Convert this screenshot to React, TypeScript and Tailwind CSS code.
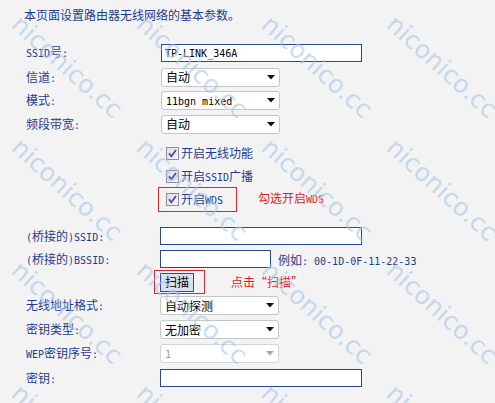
import React from 'react';

const mono = "font-['DejaVu_Sans_Mono',monospace] text-[10px]";

// split ascii runs so that latin chars get the narrow mono face, like the router's SimSun page
const Txt: React.FC<{ s: string }> = ({ s }) => {
  const parts = s.split(/([\x20-\x7e]+)/).filter((p) => p !== '');
  return (
    <>
      {parts.map((p, i) =>
        /^[\x20-\x7e]+$/.test(p) ? (
          <span key={i} className={mono}>
            {p}
          </span>
        ) : (
          <span key={i}>{p}</span>
        ),
      )}
    </>
  );
};

const Arrow: React.FC<{ disabled?: boolean }> = ({ disabled }) => (
  <svg width="8" height="5" viewBox="0 0 8 5" className="shrink-0">
    <polygon points="0,0 8,0 4,4.5" fill={disabled ? '#a8a8a8' : '#111'} />
  </svg>
);

const Select: React.FC<{ value: string; disabled?: boolean; shift?: boolean }> = ({
  value,
  disabled,
  shift,
}) => (
  <div
    className={
      'flex items-center justify-between w-[119px] h-[19px] rounded-[3px] border bg-white pl-[4px] pr-[4px] ' +
      (disabled ? 'border-[#d4d4d4] text-[#9a9a9a]' : 'border-[#c6c6c6] text-black') +
      (shift ? ' ml-px' : '')
    }>
    <span className="leading-none">
      <Txt s={value} />
    </span>
    <Arrow disabled={disabled} />
  </div>
);

const Input: React.FC<{ value?: string; w: string; shift?: boolean }> = ({ value, w, shift }) => (
  <div
    className={
      'flex items-center h-[18px] border border-[#27478f] bg-white pl-[3px] text-black ' +
      w +
      (shift ? ' ml-px' : '')
    }>
    {value && <span className="leading-none"><Txt s={value} /></span>}
  </div>
);

const Check: React.FC = () => (
  <svg width="13" height="13" viewBox="0 0 13 13" className="shrink-0">
    <defs>
      <linearGradient id="cbg" x1="0" y1="0" x2="1" y2="1">
        <stop offset="0" stopColor="#dcdde6" />
        <stop offset="1" stopColor="#f6f6f8" />
      </linearGradient>
    </defs>
    <rect x="0.5" y="0.5" width="12" height="12" fill="url(#cbg)" stroke="#8b8e98" />
    <path d="M3 6.2 L5.3 9.2 L10 3" fill="none" stroke="#4b4aa6" strokeWidth="1.8" />
  </svg>
);

const Row: React.FC<{ label?: string; h: string; children?: React.ReactNode }> = ({
  label,
  h,
  children,
}) => (
  <div className={'flex items-center ' + h}>
    <div className="w-[134px] shrink-0 leading-none">{label && <Txt s={label} />}</div>
    <div className="flex items-center">{children}</div>
  </div>
);

const Watermark: React.FC = () => {
  const marks: { left: number; top: number }[] = [];
  for (let r = 0; r < 4; r++) {
    for (let c = 0; c < 4; c++) {
      marks.push({ left: 24 + c * 125, top: 11 + r * 123 });
    }
  }
  return (
    <div className="pointer-events-none absolute inset-0 overflow-hidden">
      {marks.map((m, i) => (
        <span
          key={i}
          className="absolute origin-top-left rotate-[42deg] whitespace-nowrap font-['DejaVu_Sans',sans-serif] text-[25px] leading-none text-[#a9c6ea] opacity-60"
          style={{ left: m.left, top: m.top }}>
          niconico.cc
        </span>
      ))}
    </div>
  );
};

export default function App() {
  return (
    <div className="relative w-[495px] h-[403px] overflow-hidden bg-[#f3f3f3] font-['Noto_Sans_CJK_SC',sans-serif] text-[12px] text-[#1d3d8e]">
      <div className="h-[30px] pl-[24px] flex items-center leading-none">
        本页面设置路由器无线网络的基本参数。
      </div>

      <div className="mt-[10px] pl-[26px]">
        <Row label="SSID号:" h="h-[25px]">
          <Input value="TP-LINK_346A" w="w-[201px]" shift />
        </Row>
        <Row label="信道:" h="h-[24px]">
          <Select value="自动" shift />
        </Row>
        <Row label="模式:" h="h-[23px]">
          <Select value="11bgn mixed" shift />
        </Row>
        <Row label="频段带宽:" h="h-[24px]">
          <Select value="自动" shift />
        </Row>

        <div className="mt-[5px]">
          <Row h="h-[24px]">
            <div className="flex items-center gap-[2px] pl-[6px] leading-none">
              <Check />
              <span>开启无线功能</span>
            </div>
          </Row>
          <Row h="h-[23px]">
            <div className="flex items-center gap-[2px] pl-[6px] leading-none">
              <Check />
              <span>
                <Txt s="开启SSID广播" />
              </span>
            </div>
          </Row>
          <Row h="h-[23px]">
            <div className="flex items-center">
              <div className="-ml-[2px] flex items-center gap-[2px] w-[79px] h-[25px] border border-[#d8262a] pl-[7px] leading-none">
                <Check />
                <span>
                  <Txt s="开启WDS" />
                </span>
              </div>
              <span className="ml-[21px] -mt-[3px] leading-none text-[#e51c1c]">
                <Txt s="勾选开启WDS" />
              </span>
            </div>
          </Row>
        </div>

        <div className="mt-[13px]">
          <Row label="(桥接的)SSID:" h="h-[24px]">
            <Input w="w-[202px]" />
          </Row>
          <Row label="(桥接的)BSSID:" h="h-[22px]">
            <Input w="w-[111px]" />
            <span className="ml-[7px] mt-[3px] leading-none">
              <Txt s="例如: 00-1D-0F-11-22-33" />
            </span>
          </Row>
          <Row h="h-[24px]">
            <div className="-ml-[6px] flex items-center w-[51px] h-[24px] border border-[#d8262a] pl-[5px]">
              <div className="flex items-center justify-center w-[34px] h-[19px] border border-[#2e4c92] bg-[#d8e0f1] text-black leading-none">
                扫描
              </div>
            </div>
            <span className="ml-[26px] leading-none text-[#e51c1c]">点击“扫描”</span>
          </Row>
          <Row label="无线地址格式:" h="h-[23px]">
            <Select value="自动探测" />
          </Row>
          <Row label="密钥类型:" h="h-[25px]">
            <Select value="无加密" />
          </Row>
          <Row label="WEP密钥序号:" h="h-[23px]">
            <Select value="1" disabled />
          </Row>
          <Row label="密钥:" h="h-[26px]">
            <Input w="w-[202px]" />
          </Row>
        </div>
      </div>

      <Watermark />
    </div>
  );
}
